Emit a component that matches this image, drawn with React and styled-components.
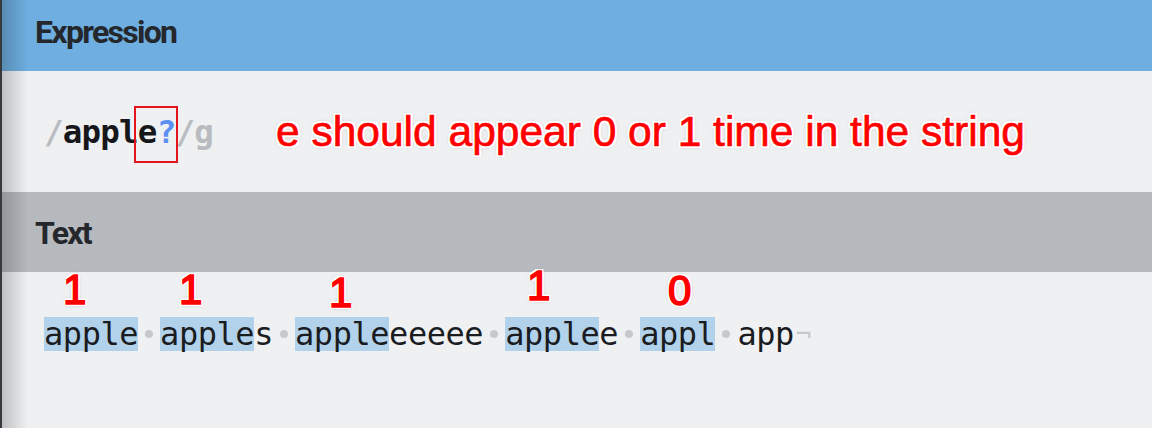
import React from "react";
import styled, { createGlobalStyle } from "styled-components";

const GlobalStyle = createGlobalStyle`
  html, body {
    margin: 0;
    padding: 0;
    background: #eff0f2;
    overflow: hidden;
  }
`;

const halo = `
  0 0 1px #fff,
  2px 0 0 #fff, -2px 0 0 #fff, 0 2px 0 #fff, 0 -2px 0 #fff,
  2px 2px 0 #fff, -2px -2px 0 #fff, 2px -2px 0 #fff, -2px 2px 0 #fff,
  0 0 5px rgba(0, 0, 0, 0.28)
`;

const Page = styled.div`
  position: relative;
  height: 428px;
  background: #eff0f2;
  overflow: hidden;

  &::before {
    content: "";
    position: absolute;
    left: 0;
    top: 0;
    bottom: 0;
    width: 28px;
    z-index: 5;
    pointer-events: none;
    background: linear-gradient(
      to right,
      #36393d 0,
      #36393d 2px,
      rgba(0, 0, 0, 0.2) 2px,
      rgba(0, 0, 0, 0) 28px
    );
  }
`;

const Header = styled.div`
  box-sizing: border-box;
  height: ${(p) => p.$h}px;
  padding: ${(p) => p.$pt}px 0 0 35px;
  background: ${(p) => p.$bg};
  font: 700 32px/1 Roboto, "Liberation Sans", sans-serif;
  letter-spacing: -1.7px;
  color: #24272b;
`;

const ExprBody = styled.div`
  position: relative;
  box-sizing: border-box;
  height: 121px;
  padding: 41px 0 0 44px;
`;

const ExprLine = styled.div`
  font: 700 32.5px/40px "DejaVu Sans Mono", "Liberation Mono", monospace;
  letter-spacing: -0.8px;
  white-space: pre;
  color: #15171a;
`;

const Tok = styled.span`
  color: ${(p) => p.$c || "#15171a"};
`;

const RedBox = styled.div`
  position: absolute;
  left: 134px;
  top: 35px;
  width: 44px;
  height: 57px;
  box-sizing: border-box;
  border: 2px solid #e3141c;
`;

const Note = styled.div`
  position: absolute;
  left: ${(p) => p.$x}px;
  top: ${(p) => p.$y}px;
  font: 400 ${(p) => p.$size}px/1 "Liberation Sans", Arial, sans-serif;
  -webkit-text-stroke: ${(p) => (p.$bold ? 1.6 : 0.7)}px #ff0000;
  color: #ff0000;
  white-space: nowrap;
  text-shadow: ${halo};
  z-index: 2;
`;

const TextBody = styled.div`
  position: relative;
  box-sizing: border-box;
  height: 156px;
  padding: 45px 0 0 44px;
`;

const Line = styled.div`
  display: flex;
  align-items: center;
  height: 34px;
  font: 400 32px/34px "DejaVu Sans Mono", "Liberation Mono", monospace;
  letter-spacing: -0.45px;
  color: #1a1c1f;
  white-space: pre;
`;

const Chunk = styled.span`
  display: inline-block;
  height: 34px;
  background: ${(p) => (p.$match ? "#b2d2eb" : "transparent")};
`;

const Sep = styled.span`
  display: inline-flex;
  align-items: center;
  justify-content: center;
  width: 22px;
  height: 34px;

  &::after {
    content: "";
    width: 8px;
    height: 8px;
    border-radius: 50%;
    background: #c6c9cc;
  }
`;

const Eol = styled.span`
  color: #c6c9cc;
  font-size: 26px;
  margin-left: 2px;
`;

const words = [
  ["apple", ""],
  ["apple", "s"],
  ["apple", "eeeee"],
  ["apple", "e"],
  ["appl", ""],
  ["", "app"],
];

const counts = [
  { n: "1", x: 63, y: -3 },
  { n: "1", x: 179, y: -3 },
  { n: "1", x: 329, y: 0 },
  { n: "1", x: 527, y: -7 },
  { n: "0", x: 668, y: -2 },
];

export default function App() {
  return (
    <Page>
      <GlobalStyle />
      <Header $h={71} $pt={16} $bg="#6eaee0">
        Expression
      </Header>
      <ExprBody>
        <ExprLine>
          <Tok $c="#b8bcc0">/</Tok>
          <Tok>apple</Tok>
          <Tok $c="#5b8ff2">?</Tok>
          <Tok $c="#b8bcc0">/g</Tok>
        </ExprLine>
        <RedBox />
        <Note $x={276} $y={40} $size={42.5}>
          e should appear 0 or 1 time in the string
        </Note>
      </ExprBody>
      <Header $h={80} $pt={25} $bg="#b6babe">
        Text
      </Header>
      <TextBody>
        <Line>
          {words.map(([hit, rest], i) => (
            <React.Fragment key={i}>
              {i > 0 && <Sep />}
              {hit && <Chunk $match>{hit}</Chunk>}
              {rest && <Chunk>{rest}</Chunk>}
            </React.Fragment>
          ))}
          <Eol>¬</Eol>
        </Line>
        {counts.map((c, i) => (
          <Note key={i} $x={c.x} $y={c.y} $size={42} $bold>
            {c.n}
          </Note>
        ))}
      </TextBody>
    </Page>
  );
}
